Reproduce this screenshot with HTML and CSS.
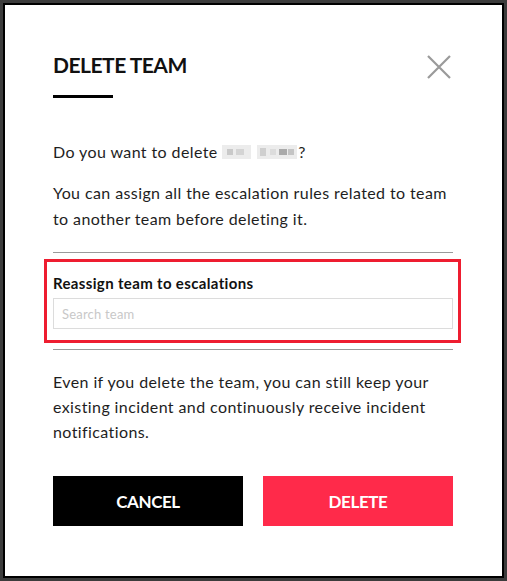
FILE: index.html
```html
<!DOCTYPE html>
<html lang="en">
<head>
    <meta charset="UTF-8">
    <meta name="viewport" content="width=device-width, initial-scale=1.0">
    <title>Delete team</title>
    <link rel="stylesheet" href="styles.css">
</head>
<body>
    <div class="modal">
        <div class="modal-head">
            <div>
                <h2 class="modal-title">DELETE TEAM</h2>
                <span class="title-bar"></span>
            </div>
            <button class="close-btn" aria-label="Close">
                <svg width="24" height="24" viewBox="0 0 24 24">
                    <path d="M1 1L23 23M23 1L1 23" stroke="#9a9a9a" stroke-width="2.2" fill="none"/>
                </svg>
            </button>
        </div>

        <p class="question">Do you want to delete
            <!-- team name is masked -->
            <svg class="masked" width="75" height="14" viewBox="0 0 75 14">
                <rect x="0" y="0" width="29" height="14" fill="#ececec"/>
                <rect x="5" y="4" width="6" height="6" fill="#c9c9c9"/>
                <rect x="14" y="4" width="8" height="6" fill="#d4d4d4"/>
                <rect x="35" y="0" width="40" height="14" fill="#ececec"/>
                <rect x="38" y="3" width="6" height="8" fill="#cfcfcf"/>
                <rect x="48" y="4" width="6" height="6" fill="#dcdcdc"/>
                <rect x="57" y="4" width="8" height="6" fill="#aaaaaa"/>
                <rect x="66" y="4" width="6" height="6" fill="#c4c4c4"/>
            </svg>?</p>
        <p class="note">You can assign all the escalation rules related to team to another team before deleting it.</p>

        <hr class="divider">

        <div class="reassign">
            <label for="teamSearch">Reassign team to escalations</label>
            <input type="text" id="teamSearch" placeholder="Search team">
        </div>

        <hr class="divider">

        <p class="note keep">Even if you delete the team, you can still keep your existing incident and continuously receive incident notifications.</p>

        <div class="actions">
            <button class="btn btn-cancel">CANCEL</button>
            <button class="btn btn-delete">DELETE</button>
        </div>
    </div>
</body>
</html>
```

FILE: styles.css
```css
* {
    box-sizing: border-box;
}

body {
    margin: 0;
    padding: 3px;
    background-color: #3c3c3c; /* dim backdrop */
    font-family: Lato, "Noto Sans", sans-serif;
    color: #1e1e1e;
}

.modal {
    height: 575px;
    background-color: #fff;
    border: 2px solid #000;
    padding: 45px 49px 0 48px;
}

.modal-head {
    display: flex;
    justify-content: space-between;
    align-items: flex-start;
}

.modal-title {
    margin: 0;
    font-size: 21px;
    line-height: 30px;
    font-weight: bold;
    letter-spacing: -0.5px;
    color: #111;
}

.title-bar {
    display: block;
    width: 60px;
    height: 3px;
    margin-top: 15px;
    background-color: #000;
}

.close-btn {
    border: none;
    background: none;
    padding: 0;
    margin-top: 5px;
    margin-right: 2px;
    cursor: pointer;
}

.close-btn svg {
    display: block;
}

.question,
.note {
    margin: 0;
    font-size: 16px;
    line-height: 26px;
    letter-spacing: 0.4px;
}

.question {
    margin-top: 41px;
}

.masked {
    vertical-align: -1px;
    margin-left: 0;
    margin-right: 1px;
}

.note {
    margin-top: 15px;
}

.divider {
    margin: 20px 0 0;
    border: none;
    border-top: 1px solid #9a9a9a;
}

/* red highlight round the reassign field */
.reassign {
    margin: 6px -8px 6px -9px;
    padding: 11px 5px 11px 6px;
    border: 3px solid #ee1d30;
}

.reassign label {
    display: block;
    font-size: 15px;
    line-height: 20px;
    font-weight: bold;
    letter-spacing: 0.35px;
    color: #111;
}

.reassign input {
    display: block;
    width: 100%;
    height: 31px;
    margin-top: 5px;
    padding: 0 8px;
    border: 1px solid #dcdcdc;
    font-family: inherit;
    font-size: 13px;
    letter-spacing: 0.2px;
    color: #333;
}

.reassign input::placeholder {
    color: #c8c8c8;
}

.reassign + .divider {
    margin-top: 0;
}

.keep {
    margin-top: 19px;
    line-height: 25px;
}

.actions {
    display: flex;
    gap: 20px;
    margin-top: 32px;
}

.btn {
    flex: 1;
    height: 50px;
    border: none;
    color: #fff;
    font-family: inherit;
    font-size: 17px;
    font-weight: bold;
    letter-spacing: -0.4px;
    cursor: pointer;
}

.btn-cancel {
    background-color: #000;
}

.btn-delete {
    background-color: #ff2a4a;
}
```
